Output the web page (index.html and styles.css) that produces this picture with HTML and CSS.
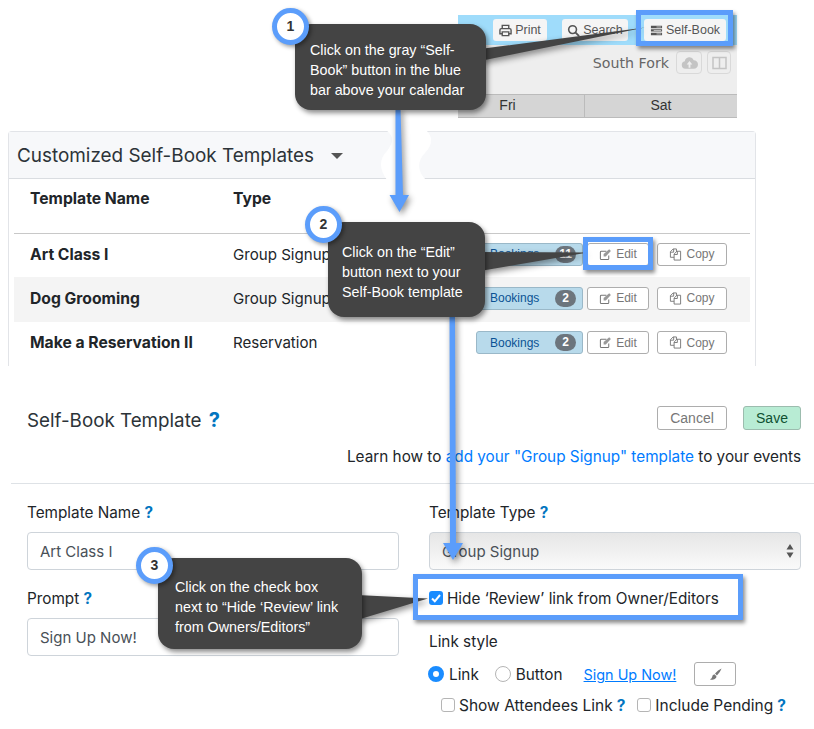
FILE: index.html
```html
<!DOCTYPE html>
<html lang="en">

<head>
    <meta charset="UTF-8">
    <meta name="viewport" content="width=device-width, initial-scale=1.0">
    <title>Self-Book Templates</title>
    <link rel="stylesheet" href="styles.css">
</head>

<body>
    <svg class="icon-defs">
        <symbol id="icon-edit" viewBox="0 0 14 14">
            <path d="M10.5 8v3.5q0 1-1 1h-7q-1 0-1-1v-7q0-1 1-1H8" fill="none" stroke="#777" stroke-width="1.1"/>
            <path d="M5 6.5l6-5.2 1.8 1.800-5.500 6H5z" fill="#999"/>
        </symbol>
        <symbol id="icon-copy" viewBox="0 0 14 14">
            <path d="M5.500 10H1.500V4l3-3h3.500v3M1.500 4.500h3.500V1" fill="none" stroke="#777" stroke-width="1"/>
            <path d="M5.500 13V6.500l3-3h4V13zM5.500 7h3.500V3.500" fill="none" stroke="#777" stroke-width="1"/>
        </symbol>
    </svg>

    <div class="page">
        <!-- calendar snippet -->
        <div class="calendar">
            <div class="cal-bar">
                <button class="cal-btn print-btn" type="button">
                    <svg class="cal-icon" viewBox="0 0 14 14"><path d="M3.500 5V1.500h7V5M3.500 10.500H1V6.500Q1 5 2.500 5h9Q13 5 13 6.500v4h-2.500M3.500 8.500h7v4h-7z" fill="none" stroke="#555" stroke-width="1.500"/></svg>
                    Print
                </button>
                <button class="cal-btn search-btn" type="button">
                    <svg class="cal-icon" viewBox="0 0 14 14"><circle cx="6" cy="6" r="4.200" fill="none" stroke="#555" stroke-width="1.700"/><path d="M9 9l4 4" stroke="#555" stroke-width="2"/></svg>
                    Search
                </button>
                <button class="cal-btn book-btn" type="button">
                    <svg class="cal-icon" viewBox="0 0 14 14"><path d="M1 2h12v2.500H1zM1 5.700h12v2.500H1zM1 9.500h12V12H1z" fill="#555"/><path d="M7 3.200h5M4 7h8M7 10.700h5" stroke="#ddd" stroke-width="0.800"/></svg>
                    Self-Book
                </button>
            </div>
            <div class="cal-tools">
                <span class="cal-name">South Fork</span>
                <span class="cal-tool">
                    <svg viewBox="0 0 18 14" class="tool-icon"><path d="M4.500 13a4 4 0 0 1-.5-7.900A5 5 0 0 1 13.500 4a4.500 4.500 0 0 1 0 9zM9 5l-3 3.500h2V12h2V8.500h2z" fill="#c4c4c4" fill-rule="evenodd"/></svg>
                </span>
                <span class="cal-tool narrow">
                    <svg viewBox="0 0 16 14" class="tool-icon"><path d="M1.500 1.500h13v11h-13zM8 1.500v11" fill="none" stroke="#c4c4c4" stroke-width="1.500"/></svg>
                </span>
            </div>
            <div class="cal-days">
                <div class="cal-day fri">Fri</div>
                <div class="cal-day sat">Sat</div>
            </div>
        </div>

        <!-- template list -->
        <div class="panel">
            <div class="panel-head">
                <h2>Customized Self-Book Templates</h2>
                <span class="caret"></span>
            </div>
            <svg class="panel-tear" viewBox="0 0 56 49"><path d="M7-1C16 6 14 12 8 20 0 28 0 38 8 49H47C38 40 38 30 46 22 54 13 54 6 47-1z" fill="#fff"/></svg>
            <div class="table">
                <div class="table-head">
                    <div class="col-name">Template Name</div>
                    <div class="col-type">Type</div>
                </div>
                <div class="row first">
                    <div class="col-name">Art Class I</div>
                    <div class="col-type">Group Signup</div>
                    <div class="row-actions">
                        <button class="btn-bookings" type="button">Bookings <span class="badge">11</span></button>
                        <button class="btn-small btn-edit" type="button"><svg class="btn-icon"><use href="#icon-edit"/></svg>Edit</button>
                        <button class="btn-small btn-copy" type="button"><svg class="btn-icon"><use href="#icon-copy"/></svg>Copy</button>
                    </div>
                </div>
                <div class="row shaded">
                    <div class="col-name">Dog Grooming</div>
                    <div class="col-type">Group Signup</div>
                    <div class="row-actions">
                        <button class="btn-bookings" type="button">Bookings <span class="badge">2</span></button>
                        <button class="btn-small btn-edit" type="button"><svg class="btn-icon"><use href="#icon-edit"/></svg>Edit</button>
                        <button class="btn-small btn-copy" type="button"><svg class="btn-icon"><use href="#icon-copy"/></svg>Copy</button>
                    </div>
                </div>
                <div class="row">
                    <div class="col-name">Make a Reservation II</div>
                    <div class="col-type">Reservation</div>
                    <div class="row-actions">
                        <button class="btn-bookings" type="button">Bookings <span class="badge">2</span></button>
                        <button class="btn-small btn-edit" type="button"><svg class="btn-icon"><use href="#icon-edit"/></svg>Edit</button>
                        <button class="btn-small btn-copy" type="button"><svg class="btn-icon"><use href="#icon-copy"/></svg>Copy</button>
                    </div>
                </div>
            </div>
        </div>

        <!-- template form -->
        <div class="form-panel">
            <div class="form-top">
                <h2>Self-Book Template <span class="help big">?</span></h2>
                <div class="form-buttons">
                    <button class="btn-cancel" type="button">Cancel</button>
                    <button class="btn-save" type="button">Save</button>
                </div>
            </div>
            <div class="learn">Learn how to <a href="#">add your "Group Signup" template</a> to your events</div>
            <div class="form-grid">
                <div class="form-col">
                    <div class="form-group">
                        <label>Template Name <span class="help">?</span></label>
                        <div class="field">Art Class I</div>
                    </div>
                    <div class="form-group">
                        <label>Prompt <span class="help">?</span></label>
                        <div class="field">Sign Up Now!</div>
                    </div>
                </div>
                <div class="form-col">
                    <div class="form-group">
                        <label>Template Type <span class="help">?</span></label>
                        <div class="field select">Group Signup
                            <svg class="updown" viewBox="0 0 8 14"><path d="M4 0l3.500 5.500h-7zM4 14L.5 8.500h7z" fill="#555"/></svg>
                        </div>
                    </div>
                    <div class="hide-row">
                        <span class="check on"><svg viewBox="0 0 14 14"><path d="M3 7.500l2.800 2.800L11 4" fill="none" stroke="#fff" stroke-width="2"/></svg></span>
                        Hide ‘Review’ link from Owner/Editors
                    </div>
                    <div class="link-label">Link style</div>
                    <div class="link-row">
                        <span class="radio on"></span><span class="radio-text">Link</span>
                        <span class="radio"></span><span class="radio-text">Button</span>
                        <a class="link-demo" href="#">Sign Up Now!</a>
                        <button class="btn-brush" type="button"><svg viewBox="0 0 16 16" class="brush"><path d="M14.500 1.500q-4 1.500-7 5.500l2 2q3.500-3.500 5-7.500zM6.800 7.800q-2.300.5-2.500 3-.2 1.500-2.300 2.200 4 1.500 6.500-1.200.8-1.200.3-2.200z" fill="#777"/></svg></button>
                    </div>
                    <div class="show-row">
                        <span class="check"></span>Show Attendees Link <span class="help">?</span>
                        <span class="check second"></span>Include Pending <span class="help">?</span>
                    </div>
                </div>
            </div>
        </div>

        <!-- annotations on top of the screenshots -->
        <svg class="arrows" viewBox="0 0 814 729">
            <path d="M395.500 108h5l2.500 87h6l-9.500 17-10-17h6z" fill="#5b9dfb"/>
            <path d="M449.500 315h5.500l1 228h7l-10 17-10-17h7z" fill="#5b9dfb"/>
            <path d="M480 49L645 27.500 480 61z" fill="#444"/>
            <path d="M480 252L588 252.500 480 271z" fill="#444"/>
            <path d="M357 595L428 598.500 357 620z" fill="#444"/>
        </svg>
        <div class="mark mark-book"></div>
        <div class="mark mark-edit"></div>
        <div class="mark mark-hide"></div>

        <div class="callout callout-1">Click on the gray “Self-<br>Book” button in the blue<br>bar above your calendar</div>
        <div class="callout callout-2">Click on the “Edit”<br>button next to your<br>Self-Book template</div>
        <div class="callout callout-3">Click on the check box<br>next to “Hide ‘Review’ link<br>from Owners/Editors”</div>
        <div class="step step-1">1</div>
        <div class="step step-2">2</div>
        <div class="step step-3">3</div>
    </div>
</body>

</html>
```

FILE: styles.css
```css
* {
    box-sizing: border-box;
}

html,
body {
    margin: 0;
    background: #fff;
}

.icon-defs {
    display: none;
}

.page {
    position: relative;
    width: 814px;
    height: 729px;
    overflow: hidden;
    padding-top: 15px;
    font-family: "Inter", "Liberation Sans", sans-serif;
    color: #212529;
}

button {
    font-family: "Liberation Sans", sans-serif;
    margin: 0;
    background: #fff;
}

/* calendar snippet */
.calendar {
    width: 279px;
    height: 103px;
    margin-left: 458px;
    background: #eee;
    font-family: "Liberation Sans", sans-serif;
}

.cal-bar {
    display: flex;
    height: 30px;
    padding: 4px 0 0 35px;
    background: #9fdcfb;
}

.cal-btn {
    display: flex;
    align-items: center;
    justify-content: center;
    gap: 3px;
    height: 22px;
    padding: 0;
    border: none;
    border-radius: 3px;
    background: #f5f5f5;
    color: #555;
    font-size: 12.5px;
}

.cal-icon {
    width: 13px;
    height: 13px;
}

.print-btn {
    width: 54px;
}

.search-btn {
    width: 66px;
    margin-left: 15px;
}

.book-btn {
    width: 82px;
    margin-left: 16px;
}

.cal-tools {
    display: flex;
    align-items: center;
    justify-content: flex-end;
    height: 49px;
    padding: 0 6px 14px 0;
}

.cal-name {
    margin-right: 7px;
    font-family: "DejaVu Sans", sans-serif;
    font-size: 14.2px;
    color: #666;
}

.cal-tool {
    display: flex;
    align-items: center;
    justify-content: center;
    width: 26px;
    height: 23px;
    border: 1px solid #d9d9d9;
    border-radius: 4px;
}

.cal-tool.narrow {
    width: 24px;
    margin-left: 5px;
}

.tool-icon {
    width: 17px;
    height: 14px;
}

.cal-days {
    display: flex;
    height: 24px;
    background: #d5d5d5;
    border-top: 1px solid #bbb;
    border-bottom: 1px solid #bbb;
    color: #333;
    font-size: 14px;
    line-height: 21px;
    text-align: center;
}

.cal-day.fri {
    width: 127px;
    padding-right: 27px;
    border-right: 1px solid #bbb;
}

.cal-day.sat {
    flex: 1;
}

/* template list */
.panel {
    position: relative;
    width: 748px;
    height: 235px;
    margin: 13px 0 0 8px;
    border: 1px solid #e2e4e8;
    border-bottom: none;
    border-radius: 4px 4px 0 0;
}

.panel-head {
    display: flex;
    align-items: center;
    height: 47px;
    padding-left: 8px;
    background: #f7f8fa;
    border-bottom: 1px solid #dadde1;
}

.panel-head h2 {
    margin: 0;
    font-size: 18.9px;
    font-weight: 400;
    color: #2c3338;
}

.caret {
    margin: 2px 0 0 17px;
    border-top: 6px solid #555;
    border-left: 6px solid transparent;
    border-right: 6px solid transparent;
}

/* white torn gap in the header bar */
.panel-tear {
    position: absolute;
    left: 370px;
    top: -1px;
    width: 56px;
    height: 49px;
}

.table {
    padding: 0 5px;
    font-size: 15.1px;
}

.table-head {
    display: flex;
    height: 55px;
    padding: 10px 0 0 16px;
    border-bottom: 1px solid #c8c8c8;
}

.row {
    display: flex;
    align-items: center;
    height: 44px;
    padding: 0 0 3px 16px;
}

.row.first {
    height: 43px;
}

.row.shaded {
    height: 45px;
    background: #f4f4f4;
}

.col-name {
    width: 203px;
    font-size: 15.7px;
    font-weight: 700;
}

.col-type {
    width: 243px;
}

.table-head .col-type {
    font-size: 15.7px;
    font-weight: 700;
}

.row-actions {
    display: flex;
    align-items: center;
    height: 23px;
}

.btn-bookings {
    display: flex;
    align-items: center;
    justify-content: space-between;
    width: 107px;
    height: 23px;
    padding: 0 6px 0 13px;
    border: 1px solid #9ab8c8;
    border-radius: 3px;
    background: #b8daeb;
    color: #0b5394;
    font-size: 12px;
}

.badge {
    width: 21px;
    height: 17px;
    border-radius: 9px;
    background: #6c757d;
    color: #fff;
    font-size: 12px;
    font-weight: 700;
    line-height: 17px;
    text-align: center;
}

.btn-small {
    display: flex;
    align-items: center;
    justify-content: center;
    gap: 4px;
    height: 23px;
    padding: 0;
    border: 1px solid #adadad;
    border-radius: 3px;
    background: #fff;
    color: #777;
    font-size: 12px;
}

.btn-icon {
    width: 13px;
    height: 13px;
}

.btn-edit {
    width: 62px;
    margin-left: 4px;
}

.btn-copy {
    width: 70px;
    margin-left: 8px;
}

/* template form */
.form-panel {
    margin-top: 40px;
    padding-left: 11px;
}

.form-top {
    display: flex;
    align-items: center;
    justify-content: space-between;
    height: 24px;
    padding: 0 13px 0 16px;
}

.form-top h2 {
    margin: 3px 0 0;
    font-size: 18.8px;
    font-weight: 400;
    color: #2c3338;
}

.form-buttons {
    display: flex;
    gap: 16px;
}

.btn-cancel,
.btn-save {
    height: 24px;
    padding: 0;
    border: 1px solid #adadad;
    border-radius: 3px;
    font-size: 14px;
}

.btn-cancel {
    width: 70px;
    color: #777;
}

.btn-save {
    width: 58px;
    background: #b8ecd4;
    border-color: #9cbcae;
    color: #0f5132;
}

.help {
    color: #0275c0;
    font-weight: 700;
}

.help.big {
    font-size: 20px;
    margin-left: 2px;
}

.learn {
    height: 54px;
    padding: 17px 13px 0 0;
    border-bottom: 1px solid #dee2e6;
    font-size: 15.3px;
    text-align: right;
}

.learn a {
    color: #007bff;
    text-decoration: none;
}

.form-grid {
    display: flex;
    gap: 30px;
    padding: 18px 0 0 16px;
    font-size: 15.3px;
}

.form-col {
    width: 372px;
}

.form-group {
    margin-bottom: 18px;
}

.form-group label {
    display: block;
    height: 30px;
    line-height: 22px;
}

.field {
    position: relative;
    height: 38px;
    padding: 0 12px;
    border: 1px solid #ced4da;
    border-radius: 4px;
    color: #495057;
    font-size: 15px;
    line-height: 38px;
}

.field.select {
    background: linear-gradient(#e6e6e6, #fafafa);
}

.updown {
    position: absolute;
    right: 6px;
    top: 11px;
    width: 8px;
    height: 14px;
}

.hide-row {
    display: flex;
    align-items: center;
    gap: 4px;
    height: 20px;
    margin-top: 2px;
}

.check {
    display: inline-block;
    flex: none;
    width: 14px;
    height: 14px;
    border: 1px solid #b5b5b5;
    border-radius: 3px;
    background: #fff;
}

.check.on {
    border: none;
    background: #1a8cff;
}

.check.on svg {
    display: block;
}

.link-label {
    margin-top: 24px;
    line-height: 20px;
}

.link-row {
    display: flex;
    align-items: center;
    height: 24px;
    margin: 10px 0 0 -1px;
}

.radio {
    flex: none;
    width: 16px;
    height: 16px;
    border: 1px solid #b5b5b5;
    border-radius: 50%;
    background: #fff;
}

.radio.on {
    border: 5px solid #1a8cff;
}

.radio-text {
    margin: 0 16px 0 5px;
}

.link-demo {
    margin-left: 5px;
    color: #007bff;
    font-size: 14.4px;
}

.btn-brush {
    display: flex;
    align-items: center;
    justify-content: center;
    width: 42px;
    height: 24px;
    margin-left: 18px;
    padding: 0;
    border: 1px solid #adadad;
    border-radius: 3px;
}

.brush {
    width: 15px;
    height: 15px;
}

.show-row {
    display: flex;
    align-items: center;
    gap: 4px;
    height: 20px;
    margin: 9px 0 0 12px;
    font-size: 15.5px;
}

.check.second {
    margin-left: 8px;
}

/* annotations */
.arrows {
    position: absolute;
    left: 0;
    top: 0;
    width: 814px;
    height: 729px;
    filter: drop-shadow(2px 3px 3px rgba(0, 0, 0, 0.45));
}

.mark {
    position: absolute;
    border: 5px solid #5b9dfb;
    box-shadow: 2px 3px 4px rgba(0, 0, 0, 0.45);
}

.mark-book {
    left: 636px;
    top: 10px;
    width: 97px;
    height: 36px;
}

.mark-edit {
    left: 583px;
    top: 237px;
    width: 70px;
    height: 33px;
}

.mark-hide {
    left: 413px;
    top: 574px;
    width: 330px;
    height: 46px;
}

.callout {
    position: absolute;
    padding-top: 16px;
    border-radius: 16px;
    background: #444;
    color: #fff;
    font-family: "Liberation Sans", sans-serif;
    font-size: 14.3px;
    line-height: 20px;
    box-shadow: 2px 3px 5px rgba(0, 0, 0, 0.45);
}

.callout-1 {
    left: 295px;
    top: 24px;
    width: 191px;
    height: 86px;
    padding-left: 15px;
}

.callout-2 {
    left: 328px;
    top: 222px;
    width: 157px;
    height: 95px;
    padding-left: 14px;
    padding-top: 20px;
}

.callout-3 {
    left: 158px;
    top: 558px;
    width: 204px;
    height: 91px;
    padding-left: 17px;
    padding-top: 19px;
}

.step {
    position: absolute;
    width: 37px;
    height: 37px;
    border: 5px solid #5b9dfb;
    border-radius: 50%;
    background: #fff;
    color: #333;
    font-family: "Liberation Sans", sans-serif;
    font-size: 14px;
    font-weight: 700;
    line-height: 27px;
    text-align: center;
    box-shadow: 2px 2px 4px rgba(0, 0, 0, 0.4);
}

.step-1 {
    left: 272px;
    top: 8px;
}

.step-2 {
    left: 305px;
    top: 206px;
}

.step-3 {
    left: 136px;
    top: 547px;
}
```
